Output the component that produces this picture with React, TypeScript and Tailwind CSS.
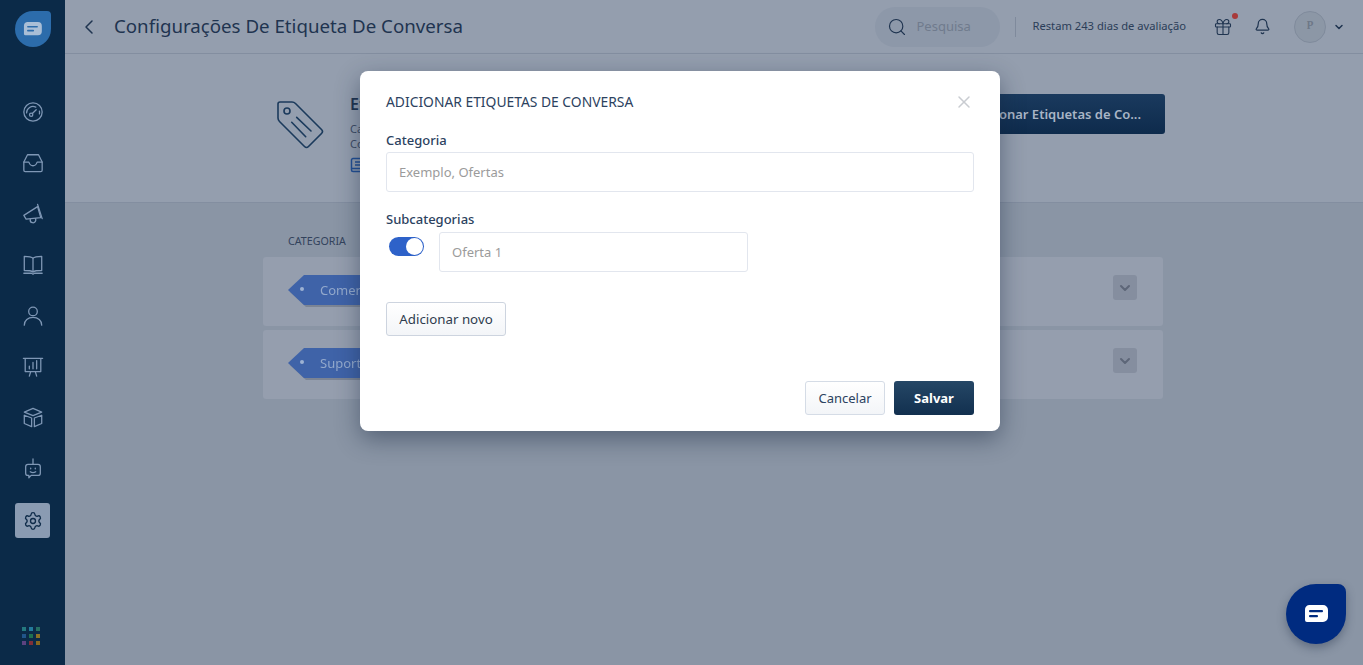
import type { ReactNode } from 'react'
import { Search, Gift, Bell, ChevronDown, ChevronLeft, X, Settings } from 'lucide-react'

const font = { fontFamily: '"Noto Sans", "Open Sans", sans-serif' }

function ChatGlyph({ className, fill, line }: { className: string; fill: string; line: string }) {
  return (
    <svg viewBox="0 0 24 18" className={className}>
      <path d="M5 0h14a5 5 0 0 1 5 5v7a5 5 0 0 1-5 5H3a2 2 0 0 1-2-2V5a5 5 0 0 1 4-5z" fill={fill} />
      <rect x="5" y="5" width="14" height="2.2" rx="1" fill={line} />
      <rect x="5" y="10" width="9" height="2.2" rx="1" fill={line} />
    </svg>
  )
}

function NavIcon({ children }: { children: ReactNode }) {
  return (
    <svg viewBox="0 0 24 24" className="h-[22px] w-[22px]" fill="none" stroke="#7f97b5" strokeWidth="1.4" strokeLinecap="round" strokeLinejoin="round">
      {children}
    </svg>
  )
}

const navIcons = [
  // dashboard dial
  <NavIcon key="dial">
    <circle cx="12" cy="12" r="10" />
    <path d="M5 13a7 7 0 0 1 10-6.300M19 11a7 7 0 0 1 0 3" />
    <circle cx="10" cy="15" r="1.800" />
    <path d="M11.300 13.700l4.200-4.200" />
  </NavIcon>,
  // inbox tray
  <NavIcon key="inbox">
    <path d="M6 3h12l4 8v9a1.500 1.500 0 0 1-1.500 1.500h-17A1.500 1.500 0 0 1 2 20v-9z" />
    <path d="M2 11h5.500c1 3 2.500 4 4.500 4s3.500-1 4.500-4H22" />
  </NavIcon>,
  // megaphone
  <NavIcon key="megaphone">
    <path d="M2 13.500l15-9.500 3.500 12-16 1.500z" />
    <path d="M17 1.500l5 15.500" />
    <path d="M9 18a3 3 0 0 0 6 1 3 3 0 0 0-.300-2" />
  </NavIcon>,
  // open book
  <NavIcon key="book">
    <path d="M12 4.500C10.500 3 7 2.500 2.500 2.500v15.500c4.500 0 8 .5 9.500 1.500 1.500-1 5-1.500 9.500-1.500V2.500C17 2.500 13.500 3 12 4.500z" />
    <path d="M12 4.500v15M2 21h8.500l1.500 1 1.500-1H22" />
  </NavIcon>,
  // person
  <NavIcon key="user">
    <circle cx="12" cy="7" r="4.700" />
    <path d="M2.500 22c0-5 4-8.500 9.500-8.500s9.500 3.500 9.500 8.500" />
  </NavIcon>,
  // presentation board
  <NavIcon key="board">
    <path d="M1.500 2.500h21M3.500 2.500v14.500h17V2.500" />
    <path d="M8 14v-3M12 14V7M16 14V5" />
    <path d="M9.500 17l-1.500 5M14.500 17l1.500 5" />
  </NavIcon>,
  // split cube
  <NavIcon key="cube">
    <path d="M12 1.500l9.500 4-9.500 4-9.500-4z" />
    <path d="M2.500 9v9l8 3.500v-9.500zM21.500 9v9l-8 3.500v-9.500z" />
  </NavIcon>,
  // bot bubble
  <NavIcon key="bot">
    <path d="M12 1v6" />
    <path d="M6.500 7h11A2.500 2.500 0 0 1 20 9.500v7a2.500 2.500 0 0 1-2.500 2.500H10l-2.500 2.500V19H6.500A2.500 2.500 0 0 1 4 16.500v-7A2.500 2.500 0 0 1 6.500 7z" />
    <path d="M9.500 11v.8M14.500 11v.8M9 15c1.800 1.200 4.200 1.200 6 0" />
  </NavIcon>,
]

function Sidebar() {
  const dots = ['#24797f', '#237a9b', '#276f62', '#21558a', '#1f7050', '#8c7125', '#5c4280', '#7f2f39', '#86681f']
  return (
    <aside className="relative z-20 flex h-full w-[65px] shrink-0 flex-col items-center bg-[#0b2a48]">
      <div className="mt-[11px] flex h-9 w-9 items-center justify-center rounded-[18px] rounded-tr-[4px] bg-[#2c6cab]">
        <ChatGlyph className="h-[14px] w-[19px]" fill="#a9bed6" line="#2c6cab" />
      </div>
      <div className="mt-[39px] flex w-full flex-col items-center">
        {navIcons.map((icon, i) => (
          <div key={i} className="flex h-[51px] w-full items-center justify-center">
            {icon}
          </div>
        ))}
      </div>
      <div className="mt-[9px] flex h-[35px] w-[35px] items-center justify-center rounded-[3px] bg-[#8a9bb2]">
        <Settings size={20} strokeWidth={1.6} className="text-[#0f2c4a]" />
      </div>
      <div className="mr-[3px] mt-[89px] grid grid-cols-3 gap-[3px]">
        {dots.map((d, i) => (
          <span key={i} className="h-1 w-1" style={{ backgroundColor: d }} />
        ))}
      </div>
    </aside>
  )
}

function Header() {
  return (
    <header className="flex h-[54px] shrink-0 items-center border-b border-[#838ea0] bg-[#949eae] pl-3 pr-[18px]">
      <ChevronLeft size={24} strokeWidth={1.5} className="text-[#1f3450]" />
      <h1 className="ml-[13px] text-[18.7px] text-[#1f3450]">Configurações De Etiqueta De Conversa</h1>
      <div className="ml-auto flex h-10 w-[125px] items-center rounded-[20px] bg-[#8d98a9] pl-[12px]">
        <Search size={20} strokeWidth={1.4} className="text-[#1f3450]" />
        <span className="ml-[9px] text-[13px] text-[#707b8d]">Pesquisa</span>
      </div>
      <div className="ml-[15px] h-5 w-px bg-[#7f8a9c]" />
      <span className="ml-4 text-[11.2px] text-[#2b3d58]">Restam 243 dias de avaliação</span>
      <div className="relative ml-[27px]">
        <Gift size={20} strokeWidth={1.3} className="text-[#1f3450]" />
        <span className="absolute right-[-5px] top-[-4px] h-[6px] w-[6px] rounded-full bg-[#a83a3a]" />
      </div>
      <Bell size={17} strokeWidth={1.7} className="ml-[21px] text-[#1f3450]" />
      <div className="ml-[23px] flex h-8 w-8 items-center justify-center rounded-full border border-[#808b9c] bg-[#8c97a6] font-serif text-[11px] font-bold text-[#6e7888]">
        P
      </div>
      <ChevronDown size={12} strokeWidth={3} className="ml-[7px] text-[#1f3450]" />
    </header>
  )
}

function LabelRow({ name }: { name: string }) {
  return (
    <div className="flex h-[69px] w-[900px] justify-between rounded-[3px] bg-[#959eae] pl-[25px] pr-[26px] pt-[18px]">
      <div className="drop-shadow-[2px_2px_0_#7b8494]">
        <div className="relative flex h-[30px] w-[130px] items-center bg-[#3f63a8] pl-[32px] pt-[2px] text-[13px] text-[#93a9cc] [clip-path:polygon(16px_0,100%_0,100%_100%,16px_100%,0_50%)]">
          <span className="absolute left-[12px] top-[12px] h-1 w-1 rounded-full bg-[#9db2d2]" />
          {name}
        </div>
      </div>
      <div className="flex h-[25px] w-6 items-center justify-center rounded-[3px] bg-[#858e9f]">
        <ChevronDown size={16} strokeWidth={3} className="text-[#5d6678]" />
      </div>
    </div>
  )
}

function Page() {
  return (
    <main className="flex min-w-0 flex-1 flex-col bg-[#8a95a5]">
      <Header />
      <section className="flex h-[149px] shrink-0 items-start border-b border-[#838ea0] bg-[#949eae] pl-[212px] pt-[47px]">
        <svg viewBox="0 0 48 48" className="h-[48px] w-[48px]" fill="none" stroke="#1b3a5c" strokeWidth="1.6" strokeLinejoin="round" strokeLinecap="round">
          <path d="M3 1h12q2 0 3.500 1.500l26 26q2 2 0 4l-13 13q-2 2-4 0l-25-25Q1 19 1 17V3q0-2 2-2z" />
          <circle cx="10" cy="10" r="3" />
          <path d="M19.700 16.300L34 30M14.700 21.300L28.700 35.700" />
        </svg>
        <div className="ml-[25px] mt-[-8px] flex-1">
          <div className="text-[16px] font-semibold leading-[22px] text-[#1f3450]">Etiquetas</div>
          <div className="mt-[6px] text-[11px] leading-[15px] text-[#3c4c64]">Categorias</div>
          <div className="text-[11px] leading-[15px] text-[#3c4c64]">Conversa</div>
          <svg viewBox="0 0 16 16" className="mt-[6px] h-[16px] w-[16px]" fill="none" stroke="#214f94" strokeWidth="1.500">
            <path d="M3 1.500h11v13H3a1.500 1.500 0 0 1-1.500-1.500V3A1.500 1.500 0 0 1 3 1.500zM5 5h7M5 8h7M2 11.500h12" />
          </svg>
        </div>
        <div className="mr-[198px] mt-[-7px] flex h-10 w-[300px] items-center justify-end rounded-[3px] bg-gradient-to-b from-[#1a3a5e] to-[#0e2b4c] pr-6 pt-[2px] text-[13px] font-semibold text-[#a9b5c6]">
          Adicionar Etiquetas de Co...
        </div>
      </section>
      <div className="flex flex-col gap-1 pl-[198px] pt-[30px]">
        <div className="pb-[4px] pl-[25px] text-[10.7px] text-[#33435c]">CATEGORIA</div>
        <LabelRow name="Comercial" />
        <LabelRow name="Suporte" />
      </div>
    </main>
  )
}

function Modal() {
  const inputClass = 'flex h-10 items-center rounded-[3px] border border-[#e2e6ee] bg-white pl-3 pt-[2px] text-[13px] text-[#9b9b9b]'
  return (
    <div className="absolute left-[360px] top-[71px] z-30 h-[360px] w-[640px] rounded-[8px] bg-white px-[26px] pt-[21px] shadow-[0_8px_24px_rgba(20,35,60,0.45)]">
      <div className="flex items-center justify-between">
        <h2 className="text-[13.85px] leading-5 text-[#2c4260]">ADICIONAR ETIQUETAS DE CONVERSA</h2>
        <X size={20} strokeWidth={1.8} className="text-[#c9ccd1]" />
      </div>
      <div className="mt-[18px] mb-[2px] text-[13px] font-medium leading-[20px] text-[#2c4260]">Categoria</div>
      <div className={`${inputClass} w-[588px]`}>Exemplo, Ofertas</div>
      <div className="mt-[17px] mb-[3px] text-[13px] font-medium leading-[20px] text-[#2c4260]">Subcategorias</div>
      <div className="flex items-start">
        <div className="ml-[3px] mt-[5px] flex h-[19px] w-[35px] items-center justify-end rounded-full bg-[#2e62c9]">
          <span className="mr-px h-[17px] w-[17px] rounded-full bg-white" />
        </div>
        <div className={`${inputClass} ml-[15px] w-[309px]`}>Oferta 1</div>
      </div>
      <button className="mt-[30px] block h-[34px] w-[120px] rounded-[3px] border border-[#cdd4df] bg-gradient-to-b from-white to-[#f3f5f8] pt-[2px] text-[13.3px] text-[#2f3c4e]">
        Adicionar novo
      </button>
      <div className="mt-[45px] flex justify-end gap-[9px]">
        <button className="h-[34px] w-[80px] rounded-[3px] border border-[#d5dce6] bg-gradient-to-b from-white to-[#f3f5f8] pt-[2px] text-[13px] text-[#2c4260]">
          Cancelar
        </button>
        <button className="h-[34px] w-[80px] rounded-[3px] bg-gradient-to-b from-[#254766] to-[#12304f] pt-[2px] text-[13px] font-bold text-white">
          Salvar
        </button>
      </div>
    </div>
  )
}

export default function App() {
  return (
    <div className="relative flex h-screen w-full overflow-hidden" style={font}>
      <Sidebar />
      <Page />
      <Modal />
      <div className="absolute bottom-[21px] right-[17px] z-30 flex h-[60px] w-[60px] items-center justify-center rounded-[30px] rounded-tr-[8px] bg-[#002b80] shadow-[0_4px_10px_rgba(20,35,60,0.35)]">
        <ChatGlyph className="h-[18px] w-[24px]" fill="#ffffff" line="#002b80" />
      </div>
    </div>
  )
}
